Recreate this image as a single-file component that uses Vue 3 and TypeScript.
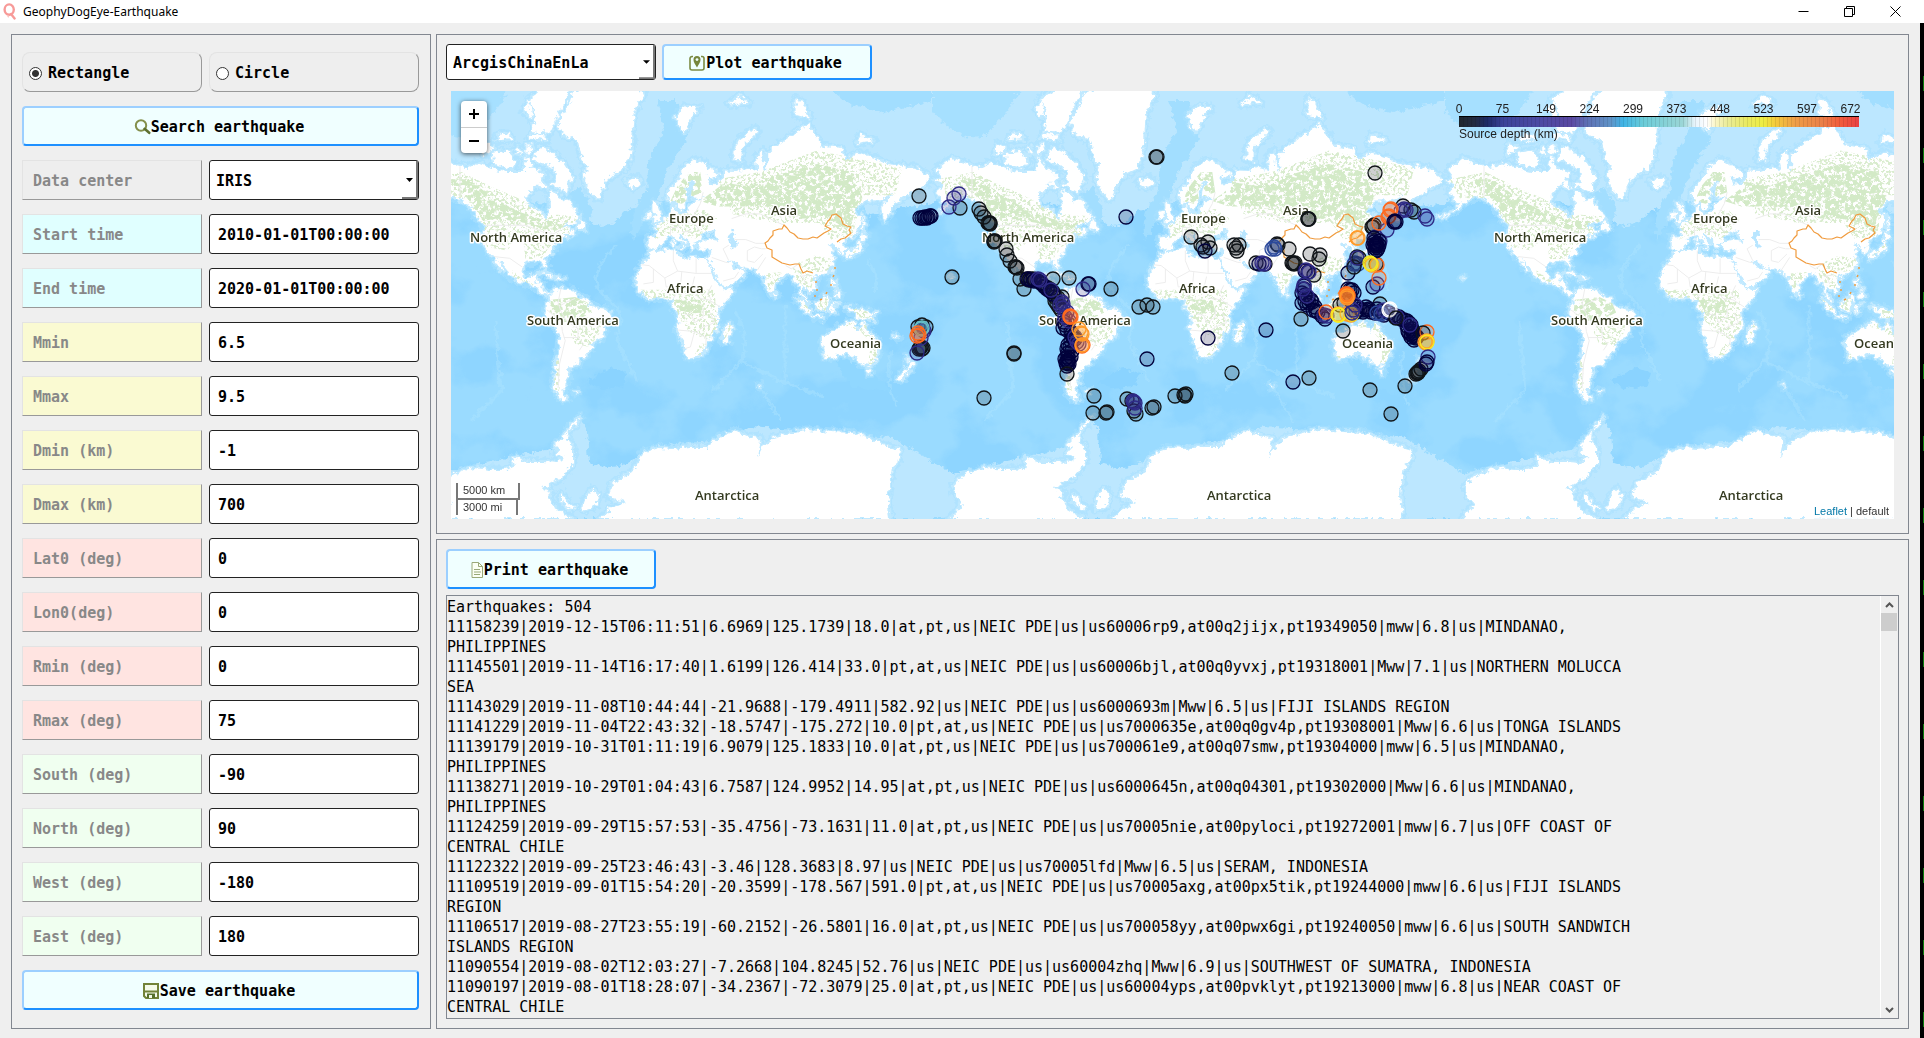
<script setup lang="ts">
import { ref } from 'vue'

interface Field { id: string; label: string; tone: string; value: string }
type Pt = [number, number]

const shape = ref('rectangle')
const center = ref('IRIS')
const basemap = ref('ArcgisChinaEnLa')

const fields = ref<Field[]>([
  { id: 'start', label: 'Start time', tone: 'cyan', value: '2010-01-01T00:00:00' },
  { id: 'end', label: 'End time', tone: 'cyan', value: '2020-01-01T00:00:00' },
  { id: 'mmin', label: 'Mmin', tone: 'gold', value: '6.5' },
  { id: 'mmax', label: 'Mmax', tone: 'gold', value: '9.5' },
  { id: 'dmin', label: 'Dmin (km)', tone: 'gold', value: '-1' },
  { id: 'dmax', label: 'Dmax (km)', tone: 'gold', value: '700' },
  { id: 'lat0', label: 'Lat0 (deg)', tone: 'rose', value: '0' },
  { id: 'lon0', label: 'Lon0(deg)', tone: 'rose', value: '0' },
  { id: 'rmin', label: 'Rmin (deg)', tone: 'rose', value: '0' },
  { id: 'rmax', label: 'Rmax (deg)', tone: 'rose', value: '75' },
  { id: 'south', label: 'South (deg)', tone: 'green', value: '-90' },
  { id: 'north', label: 'North (deg)', tone: 'green', value: '90' },
  { id: 'west', label: 'West (deg)', tone: 'green', value: '-180' },
  { id: 'east', label: 'East (deg)', tone: 'green', value: '180' },
])

const log = [
  'Earthquakes: 504',
  '11158239|2019-12-15T06:11:51|6.6969|125.1739|18.0|at,pt,us|NEIC PDE|us|us60006rp9,at00q2jijx,pt19349050|mww|6.8|us|MINDANAO,',
  'PHILIPPINES',
  '11145501|2019-11-14T16:17:40|1.6199|126.414|33.0|pt,at,us|NEIC PDE|us|us60006bjl,at00q0yvxj,pt19318001|Mww|7.1|us|NORTHERN MOLUCCA',
  'SEA',
  '11143029|2019-11-08T10:44:44|-21.9688|-179.4911|582.92|us|NEIC PDE|us|us6000693m|Mww|6.5|us|FIJI ISLANDS REGION',
  '11141229|2019-11-04T22:43:32|-18.5747|-175.272|10.0|pt,at,us|NEIC PDE|us|us7000635e,at00q0gv4p,pt19308001|Mww|6.6|us|TONGA ISLANDS',
  '11139179|2019-10-31T01:11:19|6.9079|125.1833|10.0|at,pt,us|NEIC PDE|us|us700061e9,at00q07smw,pt19304000|mww|6.5|us|MINDANAO,',
  'PHILIPPINES',
  '11138271|2019-10-29T01:04:43|6.7587|124.9952|14.95|at,pt,us|NEIC PDE|us|us6000645n,at00q04301,pt19302000|Mww|6.6|us|MINDANAO,',
  'PHILIPPINES',
  '11124259|2019-09-29T15:57:53|-35.4756|-73.1631|11.0|at,pt,us|NEIC PDE|us|us70005nie,at00pyloci,pt19272001|mww|6.7|us|OFF COAST OF',
  'CENTRAL CHILE',
  '11122322|2019-09-25T23:46:43|-3.46|128.3683|8.97|us|NEIC PDE|us|us70005lfd|Mww|6.5|us|SERAM, INDONESIA',
  '11109519|2019-09-01T15:54:20|-20.3599|-178.567|591.0|pt,at,us|NEIC PDE|us|us70005axg,at00px5tik,pt19244000|mww|6.6|us|FIJI ISLANDS',
  'REGION',
  '11106517|2019-08-27T23:55:19|-60.2152|-26.5801|16.0|at,pt,us|NEIC PDE|us|us700058yy,at00pwx6gi,pt19240050|mww|6.6|us|SOUTH SANDWICH',
  'ISLANDS REGION',
  '11090554|2019-08-02T12:03:27|-7.2668|104.8245|52.76|us|NEIC PDE|us|us60004zhq|Mww|6.9|us|SOUTHWEST OF SUMATRA, INDONESIA',
  '11090197|2019-08-01T18:28:07|-34.2367|-72.3079|25.0|at,pt,us|NEIC PDE|us|us60004yps,at00pvklyt,pt19213000|mww|6.8|us|NEAR COAST OF',
  'CENTRAL CHILE',
].join('\n')

/* Web Mercator at zoom 1: one world is 512 px wide. */
const WORLD = 512
const MAP_WIDTH = 1443
const LON0 = 209.5
const EQUATOR = 214.5
const copies = [-512, 0, 512, 1024]

function project(lon: number, lat: number): string {
  const x = LON0 + (lon * WORLD) / 360
  const rad = (lat * Math.PI) / 180
  const y = EQUATOR - (WORLD / (2 * Math.PI)) * Math.log(Math.tan(Math.PI / 4 + rad / 2))
  return `${x.toFixed(1)} ${y.toFixed(1)}`
}
function outline(coords: number[], close = true): string {
  const out: string[] = []
  for (let i = 0; i < coords.length; i += 2) out.push(project(coords[i], coords[i + 1]))
  return 'M' + out.join('L') + (close ? 'Z' : '')
}

const landCoords: number[][] = [
  // North America
  [-168,65.6,-162,66.5,-166,68.5,-156,71.3,-145,70,-136,69,-128,70.2,-115,68.5,-108,68,-96,68,-94,72,-90,69,-82,68,-82,66.5,-87,64.5,-94,61,-94.5,58.8,-92,57,-85,55.3,-82,53,-79.5,51.5,-79,54.5,-77,57,-78,62.4,-72,61.5,-69.5,58.8,-65,60,-62,57,-58,54,-56,52,-60,50.2,-66,50,-70,47,-65,48.5,-64,46,-60.5,46.5,-61,45.3,-66,43.5,-67,45,-70,43.5,-70,41.7,-74,40.5,-75.5,37.5,-76,35,-79,33.5,-81.2,31,-80,27,-80.5,25.2,-82,27,-83,29.5,-86,30.3,-90,29.2,-94,29.5,-97,27.5,-97.7,22.5,-95.5,18.7,-92,18.5,-90.5,21,-87,21.5,-88,17,-84,15.8,-83.5,11,-80,9,-77.5,8.5,-80,7.5,-84,9.5,-86,12,-88,13,-94,16,-100,17,-105.5,20,-106,23,-112,29,-114.5,31.5,-112,27,-109.5,23,-112,24.8,-115,28,-117,32.5,-120.5,34.5,-124,39.5,-124,46,-123,49,-128,51.5,-131,55,-136,58.5,-146,60.8,-152,59.5,-158,56.5,-164,54.5,-158,58.5,-162,59,-165,62,-161,64.5],
  // Canadian Arctic and Atlantic islands
  [-62,66.5,-68,70,-76,72.5,-85,73.7,-89,71,-80,70,-73,68,-73,65,-78,64.5,-66,62,-65,64],
  [-117,70,-105,69,-102,70.5,-106,73,-118,72.5],
  [-125,72,-117,73.5,-123,74.4],
  [-78,76.3,-90,76.5,-88,79,-92,81,-70,83,-62,82.3,-72,79],
  [-80,75,-92,75.5,-90,76.3,-81,75.8],
  [-90,73,-95,72.3,-95,74,-91,74],
  [-97,72,-102,72.5,-100,73.8],
  [-105,75.2,-116,75,-112,76.2,-106,76],
  [-90,78.5,-96,79.5,-92,81],
  [-80,63.5,-86,64,-84,65.8],
  [-59,47.7,-53,46.7,-53,48.5,-56,51.5],
  [-84.8,22,-82,23.1,-74.5,20.2,-77.5,20,-81,22],
  [-74,18.3,-73,19.9,-68.5,18.7,-71,18],
  // Greenland, Iceland, Svalbard
  [-45,60,-51,63,-54,67,-51,69.5,-55,71,-58,75,-68,76,-72,78,-65,80,-62,81.5,-45,82.5,-25,83,-12,81.5,-19,79,-20,75,-22,71,-25,70,-24,69,-33,67.5,-38,65.7,-41,63,-43,60],
  [-24,65.5,-22,64,-19,63.4,-14,64.5,-15,66.2,-20,66],
  [11,79,14,77,17,76.6,21,78.5,27,80,18,80],
  // South America
  [-77.5,8.5,-75,11,-71.5,12.3,-68,11,-62,10.7,-57,6,-51,4.5,-50,0,-44,-2.5,-39,-3,-35,-6,-35,-9,-39,-13,-39,-18,-41,-22,-45,-23.5,-48.5,-26,-49,-29,-53,-33.5,-57,-35,-57.5,-38,-62,-39,-65,-41,-64,-42.5,-67,-46,-66,-48,-69,-51,-68,-53,-65.5,-54.8,-69,-55.5,-73,-52.5,-75.5,-48,-73,-42,-73.5,-37,-71.5,-30,-70.3,-19,-76,-14,-81,-6,-80,-2.5,-80,0.5,-77,4],
  // Africa and Madagascar
  [-6,35.8,-2,35.2,10,37.3,11,34,15,32.3,20,31,22,33,29,31,32.5,31.2,34,28,37,21,39,16,43,12,44.5,10.5,51,12,48,5,42,-1,39,-6,40.5,-12,40,-16,35,-20,35.5,-24,32.8,-26,32,-29,28,-33,22,-34.2,18.4,-34,17,-29,14.5,-22,12,-16,13.5,-10,12,-5,9,-1,9.5,4,5,5,1,6,-4,5.2,-8,4.5,-13,8.5,-17,14,-16.5,20,-13,27.5,-9.5,31],
  [49.5,-12.3,50,-16,47,-25,44,-25,44,-20,45,-16],
  // Eurasia
  [-9,38.7,-9,43,-2,43.5,-1,46,-4.5,48.3,1.5,50,4,52,8,54,8.3,57,10.5,57.5,10,55,14,54,19,54.5,21,57.5,24,59,30,60,24,60.2,21.5,61,22,63.5,25.3,65.2,21.5,65.5,17.5,62,18.5,59.8,16.3,57,14.3,55.4,12.8,55.8,11.2,59,7,58,5,60,5.5,62.3,12,65.5,16,69,25,71,31,70,41,67.5,40,66.3,33,67,35,64.5,40,64.6,44,66.3,44,68.4,54,68.3,60,69,68,68.5,67,71.5,72,73,73,69,75,68,75,72,80,73.5,87,75,104,77.7,113,74,127,73.5,130,71,140,72.6,160,70,170,69.5,180,69,190,66.2,186,64.5,178,62.5,170,60,163,58,162.5,55.5,157,51,156,57,163,61.5,155,59.3,142,59.2,135.5,54.7,141,53,140,48,135,43.5,130.5,42.3,127.5,39.7,129.3,36,126.5,34.5,125,38,121.5,39,121,40.8,118,39,122.3,37,119.3,35,121.8,31,120,26,116,23,110.5,21.3,106.5,20,109,14,107,10.5,105,8.7,102,12.2,100.3,13.5,99.3,9.5,103.3,4,104,1.4,100.5,6,98.3,9,97.5,16.5,94.3,16,91.5,22.5,87,21.3,80.3,15.5,80,11.5,77.6,8,74.5,14,72.8,20,70,21,67,24.8,57,26,50,30,48,30,51,26,51.5,24.5,56,26,59.8,22.5,55,17.5,45,12.8,43,13.5,39,21,35,28,34.3,31.3,36,36.5,30.5,36.5,27,37,26.3,40,29,41,35,42,41.3,41.3,37.5,44.7,39,47,35,46.3,33.5,44.5,32.5,46,28.5,44,28,42,26,40.8,23,40,24,37.8,22.5,36.5,19.5,40,19.5,42,13.7,45,12.3,44.5,16,41.8,18.3,40,16,38,15.5,40,12,42,9,44.3,4,43.4,3,42,-0.3,39.3,-2,36.8,-5.5,36],
  [-5.5,50.2,1.3,51.3,0,53.5,-2,57.5,-5,58.5,-5,55.5,-3,54,-5,52],
  [-10,52,-6.3,52.3,-6,55,-9,54.5],
  [52,71,57,70.7,57,73.5,68,76.5,66,77,55,75,52,73],
  [95,79,105,78.5,100,80.5,95,81],
  [138,74.5,150,75,140,76],
  [48,80.3,62,80.5,55,81.3],
  [8.3,39,9.7,39,9.5,43,8.5,42],
  [12.5,37.8,15.5,38,15,36.8],
  // East Asian islands
  [142,54,143.5,50,143,46,142,48],
  [130.5,31.5,130,33.5,132,35.3,136,36,139,38.5,141,41.3,142,39.5,140.8,35.5,137,34.5,133,33],
  [140,41.5,141.5,45.3,145.3,43.5,143,42],
  [120,23,121.8,25,121,22],
  [120,16,121,18.6,122.3,18,121.7,14,124,12.8,120.5,13.8],
  [122,7,125.5,9.7,126.5,7,125,5.8],
  [123,10,125.5,11.5,124,10],
  [108.7,19,111,20,110,18.3],
  [80,9.5,81.8,7.5,80.3,6],
  // Indonesia and New Guinea
  [95.3,5.5,98,4.2,103.5,-1,106,-3,105.7,-5.8,102,-4,98.7,1.5],
  [109,1.5,111.5,2.5,117,7,119,5,117.5,1,116,-4,110.3,-2.9],
  [105.2,-6.8,108.5,-6.7,114.5,-7.7,114.3,-8.7,108,-7.8],
  [119,-3,120,1,125,1.5,120.5,0.3,123,-1,121.5,-2,122.5,-5,120.5,-3,119.7,-5.5],
  [131,-0.8,134,-1,135,-3.3,138,-1.7,144.5,-3.9,147.5,-6,150.5,-10.5,146,-8.5,142.5,-9.2,138,-8.3,138,-6,133,-4],
  [148.5,-5.8,152,-4.3,151,-6],
  // Australia, Tasmania, New Zealand
  [114,-22,113.5,-26,115.5,-32,115,-34.3,118,-35,124,-33.5,131,-31.5,135.5,-34.8,138,-33,140,-37.5,144,-38.5,147,-39,150,-37.3,153,-32,153.3,-26,149,-20.5,146,-18.5,145,-15,142.5,-11,141,-16,139.5,-17.5,136,-15,136.5,-12,131,-11.5,129,-15,125.5,-14.5,122,-18],
  [144.7,-41,148.3,-41,147,-43.5,145.8,-43],
  [172.7,-34.5,175,-36.7,178.5,-37.8,177,-39.5,175,-41.5,174,-39.3,174.7,-37.5],
  [172.7,-40.6,174,-41.8,171,-44,170.5,-46,168,-46.6,166.5,-46,171,-42.3],
  // Small islands
  [69,-48.6,70.5,-49,69.3,-49.7],
  [-156,20.2,-154.9,19.5,-156,19],
  [164,-20,167,-22.2,166,-22.4],
  [-61,-51.4,-58,-51.5,-60,-52.3],
  [-174,52.5,-168,53.5,-164,55,-168,53],
]
const antarctica = 'M-13 428L0 413L-8 403L-10 395L0 385L12 380L22 377L40 379L52 379L64 376L62 366L76 371L92 371L106 372L114 366L104 363L108 358L104 354L114 344L120 334L129 326L124 334L117 339L116 349L122 357L122 372L111 386L91 397L100 401L97 406L106 419L121 428ZM149 428L160 418L174 411L157 406L162 392L182 381L188 370L192 362L208 357L222 358L240 356L256 356L270 346L284 340L296 345L309 347L306 367L312 355L322 347L338 342L356 339L380 341L402 342L420 348L432 354L449 359L446 372L441 376L437 402L439 428ZM142 398L147 405L144 415L132 419L134 408ZM110 402L118 413L124 416L120 419L110 411Z'
const land = landCoords.map((c) => outline(c)).join('') + antarctica
const caspian = outline([47,45,51,46.5,53,45,51,43,53.5,40,53.5,37,50,37.5,49,41])

const denseForest = [
  [28,59,45,65,60,64,80,67,110,70,135,68,142,60,135,52,134,45,124,50,110,52,95,52,80,57,60,57,40,57],
  [-150,66,-135,66,-120,61,-100,55,-80,51,-66,51,-70,47,-82,47,-95,50,-115,52,-125,51,-132,58],
  [-77,4,-60,6,-51,2,-48,-5,-58,-10,-70,-12,-78,-5],
  [10,4,28,4,30,-5,15,-6],
  [7,59,12,64,20,68,28,68,30,62,24,61,15,58],
].map((c) => outline(c)).join('')
const sparseForest = [
  [-165,66,-140,68,-120,64,-100,60,-80,54,-58,53,-64,45,-78,38,-84,31,-95,31,-97,45,-108,36,-122,38,-126,50,-136,60,-158,60],
  [-104,24,-97,19,-85,13,-92,15,-104,20],
  [-4,42,-2,50,10,54,30,56,40,52,26,42,10,46],
  [40,66,70,68,110,73,170,69,165,61,142,61,135,44,120,42,112,50,80,50,50,54],
  [95,28,105,22,118,24,121,31,108,33,100,30],
  [93,26,108,20,106,12,102,13,96,17],
  [74,22,86,23,82,17,76,10],
  [-58,-8,-42,-8,-42,-18,-50,-28,-60,-26,-64,-18],
  [-75,-36,-71,-36,-71,-53,-75,-50],
  [-14,11,38,11,40,-14,34,-24,20,-18,14,-10,8,5,-10,5],
  [28,-26,32,-26,28,-33,24,-33],
  [108,2,118,6,116,-4,110,-3], [96,5,104,-1,105,-6,100,-1],
  [132,-1,145,-4,150,-10,138,-8],
  [130,-12,144,-12,150,-20,154,-28,150,-38,146,-38,148,-26,140,-17,131,-15],
  [116,-31,119,-35,115,-34], [44,-25,50,-15,49,-13,46,-18],
  [130,32,137,35,141,41,144,44,141,38],
].map((c) => outline(c)).join('')

const borders = [
  [-123,49,-95,49,-83,46,-75,45,-70,47], [-141,69.5,-141,60.3], [-117,32.5,-106,31.5,-97,26],
  [-13,27.5,-8,27,3,19,12,23.5,25,22,25,31.5], [-5,25,-5,16,-12,15], [9,36,9,30,12,23.5], [3,19,4,13,14,13,15,23],
  [25,22,36,22], [24,20,22,12,27,5,34,4,42,-1], [14,13,9,5], [36,14,33,8,36,4], [17,-6,22,-7,24,-12,30,-8,30,-2],
  [12,-17,24,-18,21,-28,17,-29], [24,-18,32,-22,32,-27], [35,-5,38,-12,30,-15,26,-18],
  [-70,12,-72,2,-70,-4,-66,-11,-58,-16,-58,-22,-54,-26,-57,-30], [-80,-3,-70,-10,-69,-18,-67,-24,-71,-38,-72,-50], [-68,-22,-58,-22], [-60,5,-67,2,-70,0],
  [50,52,60,54,70,54,80,51,87,49], [52,42,60,42,67,40,74,40], [61,36,66,38,71,37,74,37], [61,36,61,30,66,29,72,34],
  [48,30,44,37,48,39], [36,32,46,29,48,29], [44,17,52,19,55,23], [28,46,24,50,24,54,28,58,30,62], [7,44,7,48,12,48,14,52,20,50,24,50], [15,46,22,46], [88,27,92,25,97,28], [98,20,105,21], [100,20,102,15], [68,24,74,32],
].map((c) => outline(c, false)).join('')

const placeNames = [
  { t: 'North America', x: 19, y: 151 },
  { t: 'Europe', x: 218, y: 132 },
  { t: 'Asia', x: 320, y: 124 },
  { t: 'Africa', x: 216, y: 202 },
  { t: 'South America', x: 76, y: 234 },
  { t: 'Oceania', x: 379, y: 257 },
  { t: 'Antarctica', x: 244, y: 409 },
]
const labels = copies
  .flatMap((dx) => placeNames.map((p) => ({ ...p, x: p.x + dx })))
  .filter((p) => p.x > 0 && p.x < MAP_WIDTH)

const K = '#101418', N = '#02023c', P = '#2e2a86', B = '#2c4a9c', O = '#ff6a1f', A = '#ff9a2a', Y = '#f8ea20', W = '#ffffff', C = '#66c2c8'
const quakeSets: [string, Pt[]][] = [
  [K, [[468,105],[509,117],[528,118],[530,122],[533,126],[538,132],[539,133],[537,132],[539,132],[543,150],[544,150],[543,151],[555,158],[556,164],[559,170],[564,176],[566,177],[565,176],[569,188],[573,198],[602,188],[618,187],[660,198],[501,186],[563,262],[563,263],[533,307],[705,66],[706,66],[688,216],[696,214],[702,216],[781,282],[643,305],[642,322],[655,322],[656,321],[676,308],[681,310],[685,323],[683,320],[701,317],[703,316],[724,305],[733,304],[735,303],[734,305]]],
  [K, [[740,146],[757,151],[750,154],[752,156],[759,157],[783,154],[788,154],[786,160],[785,157],[805,172],[814,173],[826,153],[827,154],[838,158],[841,172],[842,172],[844,172],[843,173],[863,184],[859,163],[869,164],[868,168],[857,128],[858,128],[857,128],[924,82],[850,228],[892,240],[889,214],[893,212],[929,213],[919,299],[940,323],[858,287],[954,295]]],
  [N, [[469,127],[471,127],[473,127],[474,126],[476,127],[477,126],[479,125],[480,125],[675,126],[696,268],[757,247],[815,239],[637,193],[638,193],[754,160],[808,173],[842,291],[897,182],[922,196]]],
  [P, [[508,103],[503,107],[498,116],[632,198],[811,172],[813,173]]],
  [K, [[576,188],[578,189],[579,188],[582,188],[584,189],[591,193],[594,196],[597,197],[600,199],[602,201],[604,206],[607,207],[611,206],[604,210],[606,213],[608,216],[610,219]]],
  [N, [[577,188],[580,189],[583,190],[587,190],[590,192],[593,195],[596,198],[599,200],[602,203],[613,231],[614,234],[612,237],[616,239],[621,243],[623,246],[622,247],[624,248],[620,241],[620,250],[617,254],[616,258],[619,256],[617,262],[621,260],[616,266],[620,266],[617,270],[615,272],[616,275],[618,268],[614,268],[618,273],[616,270],[617,272]]],
  [K, [[616,283],[467,236],[475,236],[471,234],[469,257],[471,258],[470,256],[472,257],[468,258]]],
  [P, [[587,188],[589,189],[600,199],[611,211],[609,214],[612,213],[612,217],[616,221],[614,226],[618,230],[472,238],[473,240],[470,247],[466,262],[624,246],[626,251],[628,253],[683,311],[684,312],[682,310],[684,317]]],
  [C, [[471,237],[470,238]]],
  [O, [[467,242],[466,245],[468,244],[619,226],[620,226],[619,225],[631,255],[632,254]]],
  [A, [[630,242],[631,243],[628,238],[631,254]]],
  [B, [[821,158],[823,156],[824,158],[904,172],[903,173],[907,173],[929,222]]],
  [N, [[854,180],[857,181],[853,195],[853,198],[851,202],[854,204],[857,207],[860,209],[851,212],[858,212],[854,210],[861,211],[856,214],[862,219],[865,220],[867,221],[864,216],[874,228],[871,225]]],
  [P, [[855,179],[858,181],[853,194],[852,198],[856,205],[873,224],[876,225]]],
  [O, [[875,221]]],
  [K, [[906,166],[908,167],[903,176],[921,136],[923,134],[922,136],[925,173],[952,115],[963,121],[960,119]]],
  [P, [[906,167],[936,139],[926,193],[953,118],[950,120],[955,119],[974,125],[976,128],[925,146],[929,150]]],
  [O, [[928,132],[937,126],[939,119],[940,118],[938,125],[928,187],[926,174]]],
  [N, [[943,131],[945,131],[944,130],[925,154],[923,151],[924,157],[926,152],[925,155],[927,157],[928,154],[922,154],[924,160],[926,159],[928,150],[923,147],[926,155],[925,153],[924,154]]],
  [A, [[907,147],[906,147],[921,174]]],
  [Y, [[920,173],[919,172]]],
  [N, [[899,199],[897,198],[901,199],[903,202],[899,206],[900,210],[906,216],[905,221],[909,218],[912,219],[916,219],[915,216],[918,218],[912,221],[920,221],[924,222],[926,218],[930,220],[933,224],[938,222],[943,224],[944,226],[948,226],[950,228],[953,229],[956,230],[958,232],[960,234],[961,238],[957,240],[960,243],[963,242],[962,245],[960,246],[965,247],[963,249],[966,246],[958,242],[964,244],[956,235],[961,240]]],
  [B, [[926,222],[930,223]]],
  [A, [[887,223],[900,224],[896,223]]],
  [Y, [[887,224],[888,224],[901,223]]],
  [P, [[902,219],[904,214],[901,222],[933,219],[959,234],[946,226]]],
  [O, [[896,204],[895,203],[897,205],[896,206],[896,203],[897,204],[976,241]]],
  [A, [[896,205],[896,207]]],
  [W, [[938,219],[939,218]]],
  [K, [[972,242],[945,227],[967,281],[966,282],[968,280],[965,283],[967,282],[970,278]]],
  [A, [[975,252],[976,250],[974,251]]],
  [Y, [[976,251]]],
  [P, [[977,266]]],
  [N, [[976,271],[975,273]]],
]
const quakes = quakeSets.flatMap(([color, pts]) => pts.map(([x, y]) => ({ color, x, y })))

const ticks = [0, 75, 149, 224, 299, 373, 448, 523, 597, 672]
const stops: [number, string][] = [
  [0, '#20262c'], [4, '#222b42'], [7, '#1c2a66'], [11, '#3b4398'], [20, '#4c4aa4'], [28, '#5a48a2'], [32, '#5e70b4'], [38, '#6094c8'], [41, '#3fb4e6'], [46, '#6accd8'], [56, '#9cd6d6'], [59, '#e8f4fc'], [62, '#ffffff'], [64, '#fbf6c8'], [67, '#eaec9a'], [72, '#eaea60'], [76, '#eeee44'], [79, '#f4cc3c'], [84, '#ee9e48'], [91, '#ea7e48'], [95, '#f25e3c'], [100, '#e84044'],
]
</script>

<template>
  <div class="screen">
    <div class="window">
      <header class="titlebar">
        <svg class="logo" viewBox="0 0 14 17" aria-hidden="true">
          <ellipse cx="6.2" cy="6.6" rx="4.6" ry="5.2" fill="none" stroke="#f79a98" stroke-width="2.4" />
          <path d="M8 11l3.600 4.400" stroke="#f79a98" stroke-width="2.4" stroke-linecap="round" />
          <path d="M4.400 12.400l1.400 1.800" stroke="#fbc4c2" stroke-width="1.4" />
        </svg>
        <h1>GeophyDogEye-Earthquake</h1>
        <div class="caption-buttons">
          <button type="button" aria-label="Minimize"><svg viewBox="0 0 11 11"><path d="M.5 5.500h10" /></svg></button>
          <button type="button" aria-label="Restore"><svg viewBox="0 0 11 11"><path d="M.5 2.500h8v8h-8zM2.500 2.500v-2h8v8h-2" /></svg></button>
          <button type="button" aria-label="Close"><svg viewBox="0 0 11 11"><path d="M.5.5l10 10M10.500.5l-10 10" /></svg></button>
        </div>
      </header>

      <main class="body">
        <form class="panel side" @submit.prevent>
          <div class="row">
            <label class="radio"><input v-model="shape" type="radio" name="shape" value="rectangle" />Rectangle</label>
            <label class="radio"><input v-model="shape" type="radio" name="shape" value="circle" />Circle</label>
          </div>
          <button class="action" type="button">
            <svg width="17" height="16" viewBox="0 0 17 16" aria-hidden="true">
              <circle cx="7" cy="6.5" r="5.2" fill="none" stroke="#84904c" stroke-width="2" />
              <path d="M10.600 9.800l4.600 4" stroke="#5e7030" stroke-width="2.6" stroke-linecap="round" />
            </svg>Search earthquake
          </button>
          <div class="row">
            <label class="name plain" for="center">Data center</label>
            <span class="drop">
              <select id="center" v-model="center"><option>IRIS</option></select>
              <svg class="drop-mark" viewBox="0 0 16 38" preserveAspectRatio="none" aria-hidden="true"><path d="M4 17h7l-3.500 4z" fill="#000" /><path d="M0 37h15V0" fill="none" stroke="#777" stroke-width="2" /></svg>
            </span>
          </div>
          <div v-for="f in fields" :key="f.id" class="row">
            <label class="name" :class="f.tone" :for="f.id">{{ f.label }}</label>
            <input :id="f.id" v-model="f.value" class="value" type="text" />
          </div>
          <button class="action" type="button">
            <svg width="17" height="16" viewBox="0 0 17 16" aria-hidden="true">
              <path d="M1 1h14v14H3l-2-2z" fill="#f4faea" stroke="#728238" stroke-width="2" />
              <path d="M1 8.500h14" stroke="#728238" stroke-width="2" />
              <path d="M4 10.500h8V15H4z" fill="#56702c" /><path d="M6 12h3v3H6z" fill="#f4faea" />
            </svg>Save earthquake
          </button>
        </form>

        <div class="content">
          <section class="panel map-panel">
            <div class="toolbar">
              <span class="drop">
                <select v-model="basemap" aria-label="Base map"><option>ArcgisChinaEnLa</option></select>
                <svg class="drop-mark" viewBox="0 0 16 38" preserveAspectRatio="none" aria-hidden="true"><path d="M4 17h7l-3.500 4z" fill="#000" /><path d="M0 37h15V0" fill="none" stroke="#777" stroke-width="2" /></svg>
              </span>
              <button class="action" type="button">
                <svg width="17" height="18" viewBox="0 0 17 18" aria-hidden="true">
                  <path d="M4 2.500H3a2 2 0 0 0-2 2V14a2 2 0 0 0 2 2h10a2 2 0 0 0 2-2V4.500a2 2 0 0 0-2-2h-1" fill="none" stroke="#7c8c44" stroke-width="1.6" />
                  <path d="M8 13.500C5.500 9.500 4.500 8 4.500 5.600a3.500 3.500 0 0 1 7 0C11.500 8 10.500 9.500 8 13.500z" fill="#76863c" /><circle cx="8" cy="5.600" r="1.400" fill="#f0ffff" />
                </svg>Plot earthquake
              </button>
            </div>

            <div class="map">
              <svg class="canvas" viewBox="0 0 1443 428" preserveAspectRatio="xMidYMid slice" role="img" aria-label="World map of earthquakes">
                <defs>
                  <filter id="coast" x="0" y="0" width="1443" height="428" filterUnits="userSpaceOnUse" color-interpolation-filters="sRGB">
                    <feTurbulence type="fractalNoise" baseFrequency="0.2" numOctaves="3" seed="3" result="n" />
                    <feDisplacementMap in="SourceGraphic" in2="n" scale="8" xChannelSelector="R" yChannelSelector="G" />
                  </filter>
                  <filter id="dense" x="0" y="0" width="1443" height="428" filterUnits="userSpaceOnUse" color-interpolation-filters="sRGB">
                    <feTurbulence type="fractalNoise" baseFrequency="0.2" numOctaves="4" seed="8" />
                    <feColorMatrix values="0 0 0 0 0  0 0 0 0 0  0 0 0 0 0  10 0 0 0 -4.2" result="m" />
                    <feComposite in="SourceGraphic" in2="m" operator="in" />
                  </filter>
                  <filter id="sparse" x="0" y="0" width="1443" height="428" filterUnits="userSpaceOnUse" color-interpolation-filters="sRGB">
                    <feTurbulence type="fractalNoise" baseFrequency="0.35" numOctaves="3" seed="21" />
                    <feColorMatrix values="0 0 0 0 0  0 0 0 0 0  0 0 0 0 0  10 0 0 0 -5" result="m" />
                    <feComposite in="SourceGraphic" in2="m" operator="in" />
                  </filter>
                  <filter id="depth" x="0" y="0" width="1443" height="428" filterUnits="userSpaceOnUse" color-interpolation-filters="sRGB">
                    <feTurbulence type="fractalNoise" baseFrequency="0.012 0.014" numOctaves="5" seed="5" />
                    <feColorMatrix values="0 0 0 0 0  0 0 0 0 0  0 0 0 0 0  8 0 0 0 -3.8" result="m" />
                    <feComposite in="SourceGraphic" in2="m" operator="in" />
                  </filter>
                  <clipPath id="land-clip"><path v-for="dx in copies" :key="dx" :d="land" :transform="`translate(${dx} 0)`" /></clipPath>
                </defs>

                <rect width="1443" height="428" fill="#9adbff" />
                <rect width="1443" height="428" fill="#8dd5ff" opacity=".85" filter="url(#depth)" />
                <g filter="url(#coast)">
                  <g v-for="dx in copies" :key="'s' + dx" :transform="`translate(${dx} 0)`">
                    <path d="M-31 112L-10 100L60 108L130 120Q150 150 175 120L215 110L300 110L400 105L420 125L445 118L482 112V-10H-31z" fill="#bce7ff" />
                    <path d="M182 150Q176 120 196 100Q192 70 214 40L206 10H226L236 48L216 80L206 106L196 126z" fill="#a2deff" />
                    <path d="M376 -5L396 12L430 22L482 10L500 16V-5z" fill="#a2deff" />
                    <path d="M-30 -5V20Q-6 50 20 46L44 20L60 -5z" fill="#a6e0ff" />
                    <path d="M106 110L130 96L142 120L134 140L120 130z" fill="#a2deff" />
                    <path d="M-11 382Q60 366 100 358L128 326L136 340L138 372Q160 380 176 372L200 356L260 350L300 336L440 346L501 382V428H-11z" fill="#bce7ff" />
                    <path d="M136 290L160 276L176 282L172 296L150 298z" fill="#8ad3ff" />
                    <path d="M380 262L420 280L440 300L400 296z" fill="#90d7ff" />
                  </g>
                  <g fill="none" stroke="#aae2ff" stroke-width="3" opacity=".5">
                    <g v-for="dx in copies" :key="'r' + dx" :transform="`translate(${dx} 0)`">
                      <path d="M166 154Q142 176 146 196L170 222L166 250L186 290" />
                      <path d="M284 220Q300 250 290 270L262 300M290 270L330 290L372 306M334 214V290M306 290L330 330" />
                      <path d="M44 230L50 300L20 330M416 170Q428 180 424 200M440 260Q434 290 446 316" />
                    </g>
                  </g>
                  <g v-for="dx in copies" :key="'h' + dx" :transform="`translate(${dx} 0)`">
                    <path :d="land" fill="none" stroke="#aae1ff" stroke-width="9" stroke-linejoin="round" opacity=".6" />
                    <path :d="land" fill="none" stroke="#c0e9ff" stroke-width="4" stroke-linejoin="round" />
                  </g>
                  <g v-for="dx in copies" :key="'l' + dx" :transform="`translate(${dx} 0)`">
                    <path :d="land" fill="#fff" />
                    <path :d="caspian" fill="#b9e6ff" />
                  </g>
                </g>
                <g clip-path="url(#land-clip)">
                  <g filter="url(#sparse)"><path v-for="dx in copies" :key="dx" :d="sparseForest" :transform="`translate(${dx} 0)`" fill="#d9ecce" /></g>
                  <g filter="url(#dense)"><path v-for="dx in copies" :key="dx" :d="denseForest" :transform="`translate(${dx} 0)`" fill="#d3eac7" /></g>
                </g>
                <g v-for="dx in copies" :key="'b' + dx" :transform="`translate(${dx} 0)`" fill="none">
                  <path :d="borders" stroke="#ededed" />
                  <path stroke="#f09a3c" stroke-width="1.2" stroke-linejoin="round" d="M386 151L390 148L394 147L400 142L398 139L400 136L396 135L392 133L390 127L385 123L381 124L379 128L377 130L374 135L380 138L377 140L373 142L366 147L362 146L357 148L352 148L347 147L343 143L339 141L336 137L333 134L331 138L328 138L325 139L322 140L322 144L319 147L317 150L314 152L316 157L321 159L321 166L326 169L331 172L339 174L344 173L348 173L350 178L352 182L356 180L362 182" />
                  <path stroke="#f09a3c" stroke-width="1.400" d="M365 190v2M366 198v2M364 204v2M369 209l2-1M375 203l1-2M380 195v-2M382 186l1-2M384 178v-2" />
                </g>
                <g class="place">
                  <text v-for="l in labels" :key="l.t + l.x" :x="l.x" :y="l.y">{{ l.t }}</text>
                </g>
                <circle v-for="(q, i) in quakes" :key="i" :cx="q.x" :cy="q.y" r="7" :stroke="q.color" :fill="q.color" fill-opacity=".2" stroke-width="1.300" />
              </svg>

              <svg class="legend" width="430" height="50" viewBox="0 0 430 50" aria-label="Source depth scale">
                <defs>
                  <linearGradient id="ramp"><stop v-for="[o, c] in stops" :key="o" :offset="o + '%'" :stop-color="c" /></linearGradient>
                  <pattern id="bars" width="4" height="10" patternUnits="userSpaceOnUse"><rect width="1" height="10" fill="#000" fill-opacity=".09" /></pattern>
                </defs>
                <text v-for="(t, i) in ticks" :key="t" :x="12 + i * 43.5" y="22" text-anchor="middle">{{ t }}</text>
                <rect x="12" y="26" width="400" height="10" fill="url(#ramp)" />
                <rect x="12" y="26" width="400" height="10" fill="url(#bars)" />
                <rect x="12" y="25" width="400" height="1" fill="#000" />
                <text x="12" y="47">Source depth (km)</text>
              </svg>

              <div class="zoom">
                <button type="button" aria-label="Zoom in"><svg viewBox="0 0 12 12"><path d="M1 6h10M6 1v10" /></svg></button>
                <button type="button" aria-label="Zoom out"><svg viewBox="0 0 12 12"><path d="M1 6h10" /></svg></button>
              </div>
              <div class="scale"><span class="km">5000 km</span><span class="mi">3000 mi</span></div>
              <div class="credit"><a href="#">Leaflet</a> | default</div>
            </div>
          </section>

          <section class="panel log-panel">
            <button class="action" type="button">
              <svg width="13" height="18" viewBox="0 0 13 18" aria-hidden="true">
                <path d="M1 1.500h6.500l4 4v11H1z" fill="#fbfff4" stroke="#9aa878" /><path d="M7.500 1.500v4h4" fill="none" stroke="#9aa878" />
                <path d="M3 8.500h6M3 11h7M3 13.500h6" stroke="#98a878" />
              </svg>Print earthquake
            </button>
            <div class="log">
              <pre>{{ log }}</pre>
              <div class="scrollbar">
                <button type="button" aria-label="Scroll up"><svg viewBox="0 0 9 6"><path d="M1 5l3.500-3.500L8 5" /></svg></button>
                <span class="thumb"></span>
                <button class="down" type="button" aria-label="Scroll down"><svg viewBox="0 0 9 6"><path d="M1 1l3.500 3.500L8 1" /></svg></button>
              </div>
            </div>
          </section>
        </div>
      </main>
    </div>
    <div class="edge"></div>
  </div>
</template>

<style>
body { background: #efefef; }
</style>

<style scoped>
* { box-sizing: border-box; }
button, input, select { font: inherit; color: inherit; margin: 0; }
.screen {
  display: flex;
  min-height: 100vh;
  font-family: "DejaVu Sans Mono", "Liberation Mono", monospace;
  font-size: 15px;
  line-height: 20px;
  color: #000;
}
.window { flex: 1; min-width: 0; display: flex; flex-direction: column; background: #efefef; }
.edge {
  width: 4px;
  border-top: 23px solid #fff;
  background: repeating-linear-gradient(#000 0 53px, #0c7a0c 53px 68px, #000 68px 72px) right / 1px 100% no-repeat #000;
}

.titlebar { display: flex; align-items: center; height: 23px; padding: 0 2px 0 3px; background: #fff; }
.logo { width: 14px; height: 17px; }
h1 { flex: 1; margin: 0; padding-left: 6px; font: 400 12px/20px "Noto Sans", "Open Sans", sans-serif; }
.caption-buttons { display: flex; }
.caption-buttons button { width: 46px; height: 20px; padding: 0; border: 0; background: none; display: grid; place-items: center; }
.caption-buttons svg { width: 11px; height: 11px; fill: none; stroke: #000; }

.body { flex: 1; display: flex; gap: 5px; padding: 11px 11px 9px; }
.panel { border: 1px solid #828790; }
.side { width: 420px; flex: none; padding: 17px 11px 17px 10px; display: flex; flex-direction: column; gap: 14px; }
.row { display: grid; grid-template-columns: 180px 1fr; gap: 7px; height: 40px; }
.radio {
  display: flex; align-items: center; gap: 6px; padding: 2px 0 0 6px; font-weight: 700;
  border: 1px solid; border-color: #e3e3e3 #999 #999 #e3e3e3; border-radius: 8px; background: #eee;
}
.radio input { appearance: none; width: 13px; height: 13px; border: 1px solid #333; border-radius: 50%; background: #fff; }
.radio input:checked { background: radial-gradient(circle, #333 0 3px, #fff 4px); }
.name {
  display: flex; align-items: center; padding: 2px 0 0 10px; font-weight: 700; color: #888;
  border: 1px solid; border-color: #e3e3e3 #999 #999 #e3e3e3;
}
.plain { background: #eee; }
.cyan { background: #e0ffff; }
.gold { background: #fafad2; }
.rose { background: #ffe4e1; }
.green { background: #f0fff0; }
.value, .drop select { width: 100%; height: 100%; border: 1px solid #222; border-radius: 3px; background: #fff; font-weight: 700; }
.value { padding: 2px 8px 0; }
.drop { position: relative; display: block; height: 100%; }
.drop select { appearance: none; padding: 2px 16px 0 6px; }
.drop-mark { position: absolute; top: 1px; right: 1px; width: 16px; height: calc(100% - 2px); pointer-events: none; }
.action {
  display: flex; align-items: center; justify-content: center; height: 40px; padding: 2px 3px 0 0;
  font-weight: 700; background: #f0ffff;
  border: 2px solid; border-color: #9ccfff #1e90ff #1e90ff #9ccfff; border-radius: 4px;
}
.action svg { flex: none; }

.content { flex: 1; min-width: 0; display: flex; flex-direction: column; gap: 5px; }
.map-panel { padding: 9px 14px 14px 9px; }
.toolbar { display: flex; gap: 6px; height: 36px; margin-bottom: 11px; }
.toolbar .drop, .toolbar .action, .log-panel .action { width: 210px; height: 100%; }
.map { position: relative; height: 428px; margin-left: 5px; overflow: hidden; font-family: "Liberation Sans", sans-serif; }
.canvas { display: block; width: 100%; height: 100%; }
.place text {
  font: 600 13px "Open Sans", "Noto Sans", sans-serif; fill: #343a20;
  stroke: #fff; stroke-width: 3px; stroke-linejoin: round; paint-order: stroke;
}
.legend { position: absolute; top: 0; right: 17px; font-size: 12px; }
.legend text { fill: #222; }
.zoom { position: absolute; top: 10px; left: 10px; width: 26px; border-radius: 4px; background: #fff; box-shadow: 0 1px 5px rgba(0, 0, 0, .65); }
.zoom button { display: grid; place-items: center; width: 26px; height: 26px; padding: 0; border: 0; background: none; }
.zoom button + button { border-top: 1px solid #ccc; }
.zoom svg { width: 12px; height: 12px; stroke: #000; stroke-width: 2; }
.scale { position: absolute; left: 5px; bottom: 4px; display: flex; flex-direction: column; align-items: flex-start; font-size: 11px; line-height: 15px; color: #333; }
.scale span { padding-left: 5px; border: 2px solid #777; border-top: 0; }
.km { width: 64px; }
.scale .mi { width: 62px; border-bottom: 0; }
.credit { position: absolute; right: 0; bottom: 0; padding: 0 5px; font-size: 11px; line-height: 16px; color: #333; background: rgba(255, 255, 255, .7); }
.credit a { color: #0078a8; text-decoration: none; }

.log-panel { flex: 1; display: flex; flex-direction: column; gap: 6px; padding: 9px; }
.log-panel .action { height: 40px; }
.log { flex: 1; display: flex; border: 1px solid #828790; }
pre { flex: 1; min-width: 0; margin: 0; padding-top: 1px; overflow: hidden; font: inherit; }
.scrollbar { display: flex; flex-direction: column; width: 18px; border-left: 1px solid #fff; }
.scrollbar button { display: grid; place-items: center; height: 17px; padding: 0; border: 0; background: none; }
.scrollbar svg { width: 9px; height: 6px; fill: none; stroke: #555; stroke-width: 2; }
.thumb { height: 18px; margin-right: 1px; background: #cdcdcd; }
.down { margin-top: auto; }
</style>
